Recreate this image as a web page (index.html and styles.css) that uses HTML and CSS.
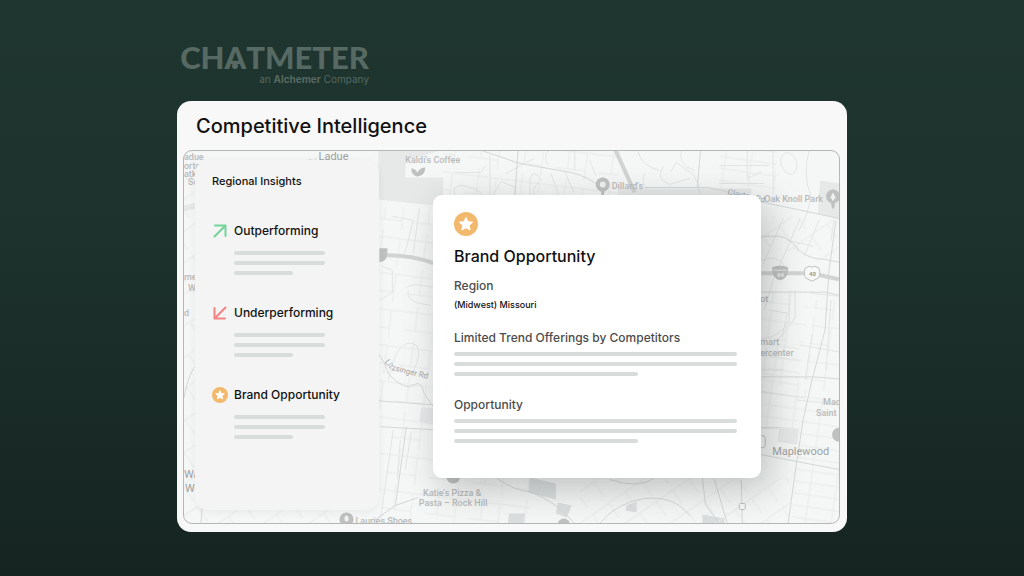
FILE: index.html
```
<!DOCTYPE html>
<html lang="en">
<head>
    <meta charset="UTF-8">
    <meta name="viewport" content="width=device-width, initial-scale=1.0">
    <title>Competitive Intelligence</title>
    <link rel="stylesheet" href="styles.css">
</head>
<body>

<div class="container">
    <header class="brand">
        <div class="brand-name">CH<span class="brand-a">A</span>TMETER</div>
        <div class="brand-sub">an <strong>Alchemer</strong> Company</div>
    </header>

    <main class="board">
        <h1>Competitive Intelligence</h1>

        <div class="stage">
            <svg class="map" viewBox="183 150 657 374" preserveAspectRatio="xMidYMid slice" aria-hidden="true">
                <defs>
                    <pattern id="blocks" width="44" height="36" patternUnits="userSpaceOnUse" patternTransform="rotate(7)">
                        <path d="M0 8H44M0 26H30M12 0V26M30 8V36" class="street"/>
                    </pattern>
                    <pattern id="rows" width="26" height="12" patternUnits="userSpaceOnUse" patternTransform="rotate(8)">
                        <path d="M0 6H26M13 0V12" class="street"/>
                    </pattern>
                    <pattern id="slant" width="20" height="26" patternUnits="userSpaceOnUse" patternTransform="rotate(-35)">
                        <path d="M0 8H20M10 8V26" class="street"/>
                    </pattern>
                </defs>

                <!-- parks and large lots -->
                <g class="park">
                    <path d="M378 150H440L405 160V177H443V206L378 199Z"/>
                    <path d="M821 180L840 183V219L819 214Z"/>
                    <path d="M618 188H752V196H618Z"/>
                    <path d="M421 408H433V425L419 422Z"/>
                    <path d="M780 427L800 429L798 445L778 442Z"/>
                    <path d="M183 205L196 202V208L183 211Z"/>
                </g>
                <g class="lot">
                    <path d="M530 478L556 484V500L528 493Z"/>
                    <path d="M558 503L572 506L567 518L556 514Z"/>
                    <path d="M627 506L637 502V513L626 511Z"/>
                    <path d="M509 514H525V524H508Z"/>
                    <path d="M703 515L725 519V524H703Z"/>
                </g>

                <!-- small streets -->
                <path d="M378 206H433V480H378Z" fill="url(#blocks)"/>
                <path d="M443 150H620L618 195H443Z" fill="url(#blocks)"/>
                <path d="M183 150H196V524H183Z" fill="url(#slant)"/>
                <path d="M183 508H345V524H183Z" fill="url(#slant)"/>
                <path d="M378 478H530V524H378Z" fill="url(#blocks)"/>
                <path d="M762 290H811L800 380L762 400Z" fill="url(#blocks)"/>
                <path d="M816 300H840V400H802Z" fill="url(#blocks)"/>
                <path d="M762 345H800V430H762Z" fill="url(#rows)"/>
                <path d="M803 400H840V524H792Z" fill="url(#rows)"/>
                <path d="M720 150H777V190H720Z" fill="url(#rows)"/>
                <path d="M762 215L840 218V260L762 245Z" fill="url(#slant)"/>
                <path d="M580 478H790V524H580Z" fill="url(#slant)"/>
                <g class="lane">
                    <path d="M392 216L413 220L404 255M419 208L413 253M380 300L392 292V270L381 266M406 288Q408 282 433 287M408 290Q404 303 431 305"/>
                    <path d="M388 380Q397 335 416 345Q422 352 413 372M400 440L397 480M393 430L380 520M411 432L405 470"/>
                    <path d="M455 195Q450 185 463 185Q476 188 484 195M493 195L501 181L515 187V195M530 195V178Q534 168 541 179Q530 190 535 195M551 173L559 195M565 171L574 192"/>
                    <path d="M455 172H480L486 165M490 155V195M506 173L534 158M548 150Q543 160 549 165M575 150V170M590 160L596 175"/>
                    <path d="M638 150Q642 166 660 170M645 173Q640 185 650 190M664 166Q655 178 670 184L690 178M671 171L677 162L694 174L700 187M682 150Q678 164 695 170"/>
                    <path d="M720 165H770M748 150V178M748 178L762 171M720 183H765M774 150V195"/>
                    <path d="M782 165Q780 152 790 152Q800 158 797 170Q790 180 782 165M810 150Q803 175 812 195Q809 215 800 230"/>
                    <path d="M784 218L764 264M801 218L774 280L765 310M820 220L805 256M835 220L832 240M788 240L814 246M762 260Q779 253 787 268"/>
                    <path d="M790 290V320Q784 335 762 340M796 290V318L777 342M813 335L806 380M832 300L827 370M762 370H785M762 392L805 398"/>
                    <path d="M770 310L788 313L783 338M811 293L840 296M801 345L840 352M797 400L840 405"/>
                </g>

                <!-- through roads -->
                <g class="road">
                    <path d="M482 150L520 163L560 170Q583 173 596 183M518 150L515 195M701 150L698 187L702 195"/>
                    <path d="M645 187H708Q728 190 755 200L840 218"/>
                    <path d="M762 236H780Q790 237 800 250Q810 259 825 259L840 262"/>
                    <path d="M762 292H826L840 295M837 220L830 270L826 330L813 380L804 420L795 480L789 524"/>
                    <path d="M762 377L815 377L840 379M378 354Q385 362 388 374Q405 392 414 385Q421 380 424 394L433 407"/>
                    <path d="M380 427L433 430M406 427L395 507M374 521L395 506L418 498M378 401L433 405"/>
                    <path d="M496 478Q515 492 530 492Q556 502 575 524M600 524Q617 503 645 499Q675 496 690 516M715 480L728 524M742 480L743 524M610 480Q640 490 655 478M703 478L706 505L720 524"/>
                    <path d="M183 398Q188 370 196 365M201 508L200 524M762 428H780M762 455L840 470"/>
                    <path d="M308 159L314 160L316 157"/>
                </g>
                <g class="highway">
                    <path d="M387 255Q412 255 433 263"/>
                    <path d="M616 150L635 192"/>
                    <path d="M762 273L812 273L840 279"/>
                </g>

                <!-- pins -->
                <g class="pin">
                    <path d="M603 177a7 7 0 0 1 2 13l-1 6h-2l-1-6a7 7 0 0 1 2-13z"/>
                    <path d="M834 189a7 7 0 0 1 2 13l-1 6h-2l-1-6a7 7 0 0 1 2-13z"/>
                    <circle cx="603" cy="184" r="7"/>
                    <circle cx="834" cy="196" r="7"/>
                    <circle cx="346" cy="520" r="7"/>
                    <circle cx="453" cy="477" r="7"/>
                    <circle cx="564" cy="525" r="6"/>
                    <circle cx="840" cy="435" r="7"/>
                    <path d="M411 168Q415 168 417 172Q420 167 425 167Q425 175 417 176Q411 175 411 168Z"/>
                </g>
                <g class="pin-mark">
                    <circle cx="603" cy="184" r="3"/>
                    <path d="M834 192l3 6h-2v2h-2v-2h-2z"/>
                    <rect x="344" y="516" width="4" height="6" rx="2"/>
                </g>

                <!-- road shields -->
                <path class="pin" d="M773 267Q781 264 789 267Q790 278 781 280Q772 278 773 267Z"/>
                <path class="pin" d="M379 248H387V255Q386 261 379 262Z"/>
                <path class="shield" d="M806 268L810 266L813 267L816 266L820 268Q822 275 819 278L813 281L807 278Q804 275 806 268Z"/>
                <rect class="shield" x="757" y="436" width="9" height="12" rx="3"/>
                <rect class="shield" x="740" y="504" width="6" height="6" rx="1"/>
                <path d="M774 270H788" stroke="#e4e6e6"/>

                <g class="label label-tiny">
                    <text x="778" y="277" fill="#eeeeee">64</text>
                    <text x="810" y="276">40</text>
                </g>
                <g class="label label-place">
                    <text x="405" y="162">Kaldi's Coffee</text>
                    <text x="612" y="189">Dillard's</text>
                    <text x="765" y="202">Oak Knoll Park</text>
                    <text x="355" y="525">Lauries Shoes</text>
                    <text x="452" y="496" text-anchor="middle">Katie's Pizza &amp;</text>
                    <text x="453" y="507" text-anchor="middle">Pasta – Rock Hill</text>
                    <text x="761" y="345">mart</text>
                    <text x="761" y="356">ercenter</text>
                    <text x="761" y="302">ot</text>
                    <text x="824" y="405">Mac</text>
                    <text x="817" y="416">Saint</text>
                    <text x="183" y="159">adue</text>
                    <text x="183" y="168">orto</text>
                    <text x="183" y="177">atki</text>
                    <text x="187" y="185">Sc</text>
                    <text x="183" y="280">me</text>
                    <text x="187" y="291">W</text>
                    <text x="183" y="316">d</text>
                </g>
                <g class="label label-road">
                    <text transform="translate(384 362) rotate(52)">Lit</text>
                    <text transform="translate(391 370) rotate(14)">zsinger Rd</text>
                    <text transform="translate(728 194) rotate(12)">Clayton Rd</text>
                </g>
                <g class="label label-town">
                    <text x="318" y="159">Ladue</text>
                    <text x="773" y="455">Maplewood</text>
                    <text x="183" y="478">Wa</text>
                    <text x="184" y="492">We</text>
                </g>
            </svg>

            <aside class="insights">
                <h2>Regional Insights</h2>

                <section class="insight">
                    <svg class="icon up" viewBox="0 0 16 16"><path d="M3 2.500H13.500V13M13 3L2.500 13.500"/></svg>
                    <h3>Outperforming</h3>
                    <div class="lines"><i></i><i></i><i></i></div>
                </section>

                <section class="insight">
                    <svg class="icon down" viewBox="0 0 16 16"><path d="M2.500 3V13.500H13M13.500 2.500L3 13"/></svg>
                    <h3>Underperforming</h3>
                    <div class="lines"><i></i><i></i><i></i></div>
                </section>

                <section class="insight">
                    <svg class="icon" viewBox="0 0 24 24"><circle cx="12" cy="12" r="12" fill="#f2b96d"/><path fill="#fff" stroke="#fff" stroke-linejoin="round" d="M12 5.400L14 9.700L18.600 10.200L15.200 13.400L16.100 18L12 15.700L7.900 18L8.800 13.400L5.400 10.200L10 9.700Z"/></svg>
                    <h3>Brand Opportunity</h3>
                    <div class="lines"><i></i><i></i><i></i></div>
                </section>
            </aside>

            <article class="card">
                <svg class="badge" viewBox="0 0 24 24"><circle cx="12" cy="12" r="12" fill="#f2b96d"/><path fill="#fff" stroke="#fff" stroke-linejoin="round" d="M12 5.400L14 9.700L18.600 10.200L15.200 13.400L16.100 18L12 15.700L7.900 18L8.800 13.400L5.400 10.200L10 9.700Z"/></svg>
                <h2>Brand Opportunity</h2>
                <h3>Region</h3>
                <p>(Midwest) Missouri</p>
                <h3>Limited Trend Offerings by Competitors</h3>
                <div class="lines"><i></i><i></i><i></i></div>
                <h3>Opportunity</h3>
                <div class="lines"><i></i><i></i><i></i></div>
            </article>
        </div>
    </main>
</div>

</body>
</html>
```
FILE: styles.css
```
* {
    box-sizing: border-box;
}
body {
    margin: 0;
    min-height: 100vh;
    padding: 40px 16px;
    background: linear-gradient(#1f352f, #1d322c 40%, #152420);
    font-family: Inter, "Open Sans", sans-serif;
    color: #111;
}
h1, h2, h3, p {
    margin: 0;
    font-weight: 500;
}
.container {
    max-width: 670px;
    margin: 0 auto;
}

/* Logo */
.brand {
    width: 192px;
    height: 61px;
    color: #566963;
    text-align: right;
}
.brand-name {
    font: 900 31px/34px Lato, sans-serif;
}
.brand-a {
    position: relative;
}
.brand-a::after {
    content: "";
    position: absolute;
    left: 50%;
    bottom: 7px;
    width: 6px;
    height: 6px;
    margin-left: -3px;
    border-radius: 50%;
    background-color: #566963;
}
.brand-sub {
    font-size: 10px;
    line-height: 10px;
}

/* Board */
.board {
    padding: 0 7px 8px 6px;
    border-radius: 14px;
    background-color: #f8f8f8;
}
h1 {
    padding: 1px 0 0 13px;
    font-size: 20px;
    line-height: 48px;
}
.stage {
    position: relative;
    display: flex;
    align-items: flex-start;
    gap: 54px;
    min-height: 374px;
    padding: 9px 11px 12px;
    border: 1px solid #b5b7b7;
    border-radius: 9px;
    background-color: #f5f6f6;
    overflow: hidden;
}

/* Map */
.map {
    position: absolute;
    top: 0;
    left: 0;
    width: 100%;
    height: 100%;
}
.map .park {
    fill: #e7e9e9;
}
.map .lot {
    fill: #dcdfdf;
}
.map .street {
    fill: none;
    stroke: #e9ebeb;
}
.map .lane {
    fill: none;
    stroke: #e3e5e5;
}
.map .road {
    fill: none;
    stroke: #d6d8d8;
}
.map .highway {
    fill: none;
    stroke: #d2d4d4;
    stroke-width: 4;
}
.map .pin {
    fill: #bfc1c1;
}
.map .pin-mark {
    fill: #f0f1f1;
}
.map .shield {
    fill: #f8f8f8;
    stroke: #bfc1c1;
}
.label {
    font-family: Roboto, sans-serif;
    fill: #b9bbbb;
}
.label-tiny {
    font-size: 6px;
    font-weight: 700;
    fill: #999;
}
.label-place {
    font-size: 9px;
    font-weight: 500;
}
.label-road {
    font-size: 8px;
    fill: #a5a7a7;
}
.label-town {
    font-size: 11px;
    fill: #a0a2a2;
}

/* Left panel */
.insights {
    position: relative;
    flex: 0 0 184px;
    min-height: 350px;
    padding: 13px 17px;
    border-radius: 14px;
    background-color: #f4f4f4;
    box-shadow: 0 2px 8px rgba(0, 0, 0, 0.06);
}
.insights h2 {
    margin-bottom: 32px;
    font-size: 11px;
    line-height: 16px;
}
.insight {
    display: grid;
    grid-template-columns: 16px 1fr;
    column-gap: 6px;
    align-items: center;
    margin-bottom: 28px;
}
.insight h3 {
    font-size: 12px;
    line-height: 20px;
    white-space: nowrap;
}
.insight .lines {
    grid-column: 2;
    width: 91px;
    padding-top: 10px;
}
.icon {
    width: 16px;
    height: 16px;
}
.up, .down {
    fill: none;
    stroke: #73d49a;
    stroke-width: 2;
    stroke-linecap: round;
}
.down {
    stroke: #f58383;
}

/* Placeholder text lines */
.lines i {
    display: block;
    height: 4px;
    margin-bottom: 6px;
    border-radius: 2px;
    background-color: #d8dcda;
}
.lines i:last-child {
    width: 65%;
    margin-bottom: 0;
}

/* Card */
.card {
    position: relative;
    flex: 0 1 328px;
    margin-top: 35px;
    padding: 17px 24px 35px 21px;
    border-radius: 9px;
    background-color: #fff;
    box-shadow: 8px 10px 36px rgba(40, 50, 48, 0.28);
}
.badge {
    display: block;
    width: 24px;
    height: 24px;
}
.card h2 {
    margin: 10px 0;
    font-size: 16px;
    line-height: 20px;
}
.card h3 {
    font-size: 12px;
    line-height: 20px;
    color: #4c4c4c;
}
.card p {
    margin: 2px 0 16px;
    font-size: 9px;
    line-height: 14px;
}
.card .lines {
    padding: 4px 0 19px;
}
.card .lines:last-child {
    padding-bottom: 0;
}
```
